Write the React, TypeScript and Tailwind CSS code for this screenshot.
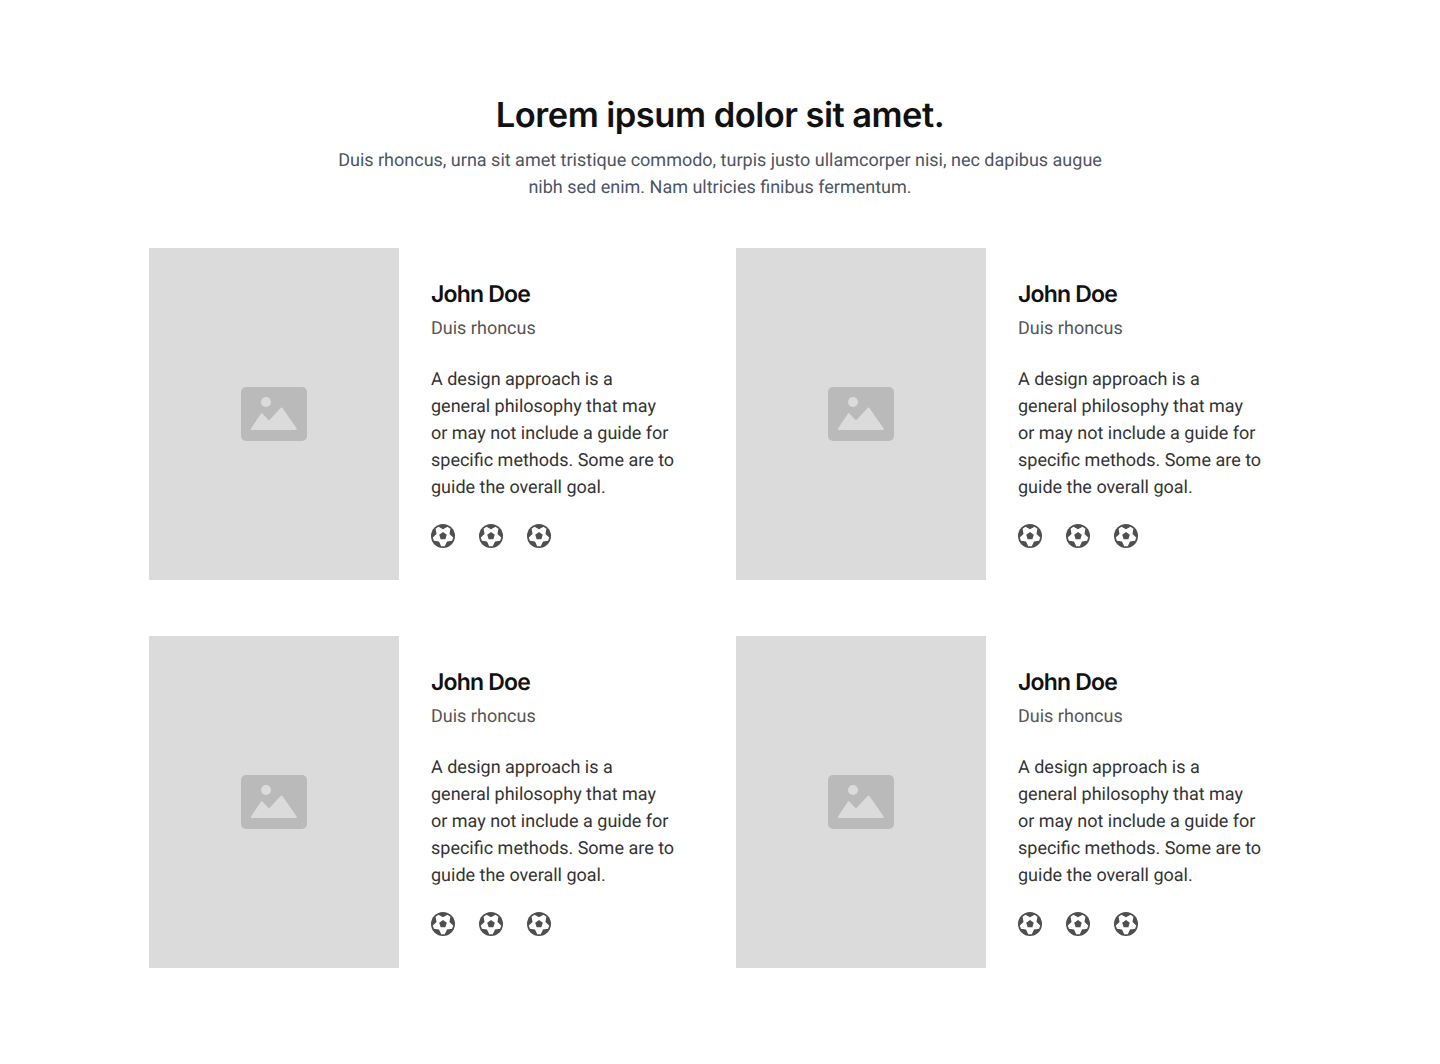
const people = [0, 1, 2, 3];
const socials = [0, 1, 2];

function ImagePlaceholder() {
  return (
    <div className="flex w-[250px] shrink-0 items-center justify-center bg-[#dbdbdb]">
      <svg width="66" height="54" viewBox="0 0 66 54" fill="none">
        <rect width="66" height="54" rx="5" fill="#bababa" />
        <circle cx="25" cy="15" r="5" fill="#dbdbdb" />
        <path
          d="M10 41.5 L20 26.5 Q20.5 25.8 21.2 26.3 L28 33.5 L39.8 20.8 Q40.5 20 41.2 20.8 L55.7 41.5 Q56.1 43 54.5 43 L11 43 Q9.5 43 10 41.5 Z"
          fill="#dbdbdb"
        />
      </svg>
    </div>
  );
}

// soccer ball: dark disc, white star, dark centre
function BallIcon() {
  return (
    <svg width="24" height="24" viewBox="0 0 24 24">
      <circle cx="12" cy="12" r="12" fill="#4f4f4f" />
      <polygon
        points="16.52,2.74 19.41,4.85 18.47,9.9 22.2,13.43 21.09,16.84 16,17.5 13.79,22.14 10.21,22.14 8,17.5 2.91,16.84 1.8,13.43 5.53,9.9 4.59,4.85 7.48,2.74 12,5.2"
        fill="#ffffff"
      />
      <polygon points="12,8 15.8,10.76 14.35,15.24 9.65,15.24 8.2,10.76" fill="#4f4f4f" />
    </svg>
  );
}

function PersonCard() {
  return (
    <div className="flex">
      <ImagePlaceholder />
      <div className="w-[305px] px-8 py-8">
        <h3 className="mb-[7px] font-['Inter',sans-serif] text-[23px] leading-[28px] font-semibold tracking-[-0.035em] text-[#111111]">
          John Doe
        </h3>
        <p className="text-lg leading-[27px] text-[#555555]">Duis rhoncus</p>
        <p className="mt-6 w-[244px] text-lg leading-[27px] text-[#333333]">
          A design approach is a general philosophy that may or may not include a guide for specific methods. Some are to guide the overall goal.
        </p>
        <div className="mt-[23px] flex gap-6">
          {socials.map((s) => (
            <BallIcon key={s} />
          ))}
        </div>
      </div>
    </div>
  );
}

export default function App() {
  return (
    <div className="min-h-[1064px] bg-white py-24 font-['Roboto',sans-serif] antialiased [text-rendering:geometricPrecision]">
      <div className="mx-auto w-[1142px]">
        <div className="mb-[47px] text-center">
          <h1 className="mb-3 font-['Inter',sans-serif] text-[34.5px] leading-[39px] font-semibold tracking-[-0.015em] text-[#111111]">
            Lorem ipsum dolor sit amet.
          </h1>
          <p className="mx-auto w-[800px] text-lg leading-[27px] text-[#4b5563]">
            Duis rhoncus, urna sit amet tristique commodo, turpis justo ullamcorper nisi, nec dapibus augue nibh sed enim. Nam ultricies finibus fermentum.
          </p>
        </div>
        <div className="grid grid-cols-2 gap-x-8 gap-y-14">
          {people.map((p) => (
            <PersonCard key={p} />
          ))}
        </div>
      </div>
    </div>
  );
}
